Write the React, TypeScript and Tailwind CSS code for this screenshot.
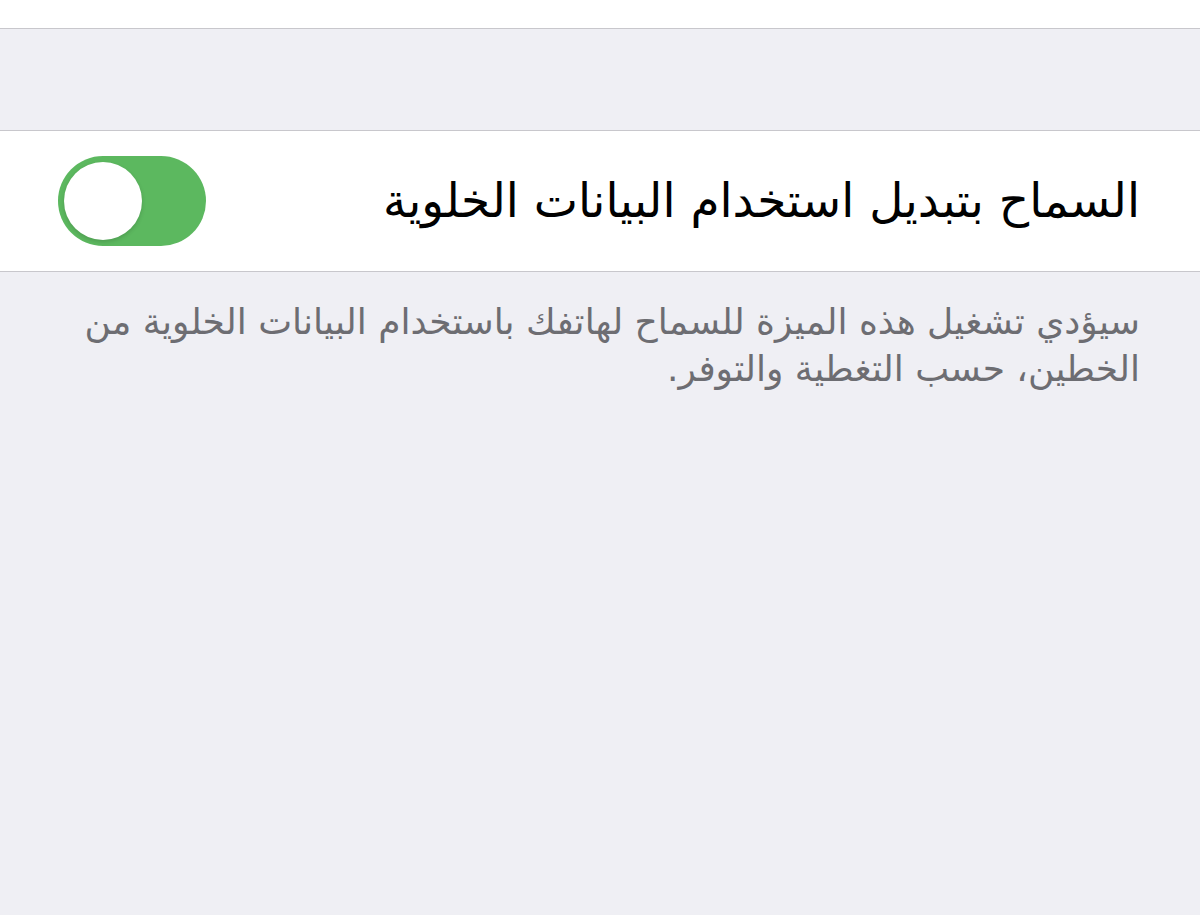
export default function App() {
  return (
    <div dir="rtl" className="w-[1200px] h-[915px] bg-[#efeff4] overflow-hidden" style={{ fontFamily: '"DejaVu Sans", sans-serif' }}>
      <div className="h-[29px] bg-white border-b border-[#c8c7cc]" />
      <div className="h-[101px]" />
      <div className="h-[142px] bg-white border-y border-[#c8c7cc] flex items-center justify-between pr-[60px] pl-[58px]">
        <span className="text-[47px] leading-[56px] text-black">السماح بتبديل استخدام البيانات الخلوية</span>
        <div className="w-[148px] h-[90px] rounded-full bg-[#5cb85f] p-[6px] flex justify-end">
          <div className="w-[78px] h-[78px] rounded-full bg-white shadow-[0_2px_4px_rgba(0,0,0,0.15)]" />
        </div>
      </div>
      <p className="pr-[60px] pl-[60px] pt-[26px] text-[36px] leading-[47px] text-[#6d6d72]">
        سيؤدي تشغيل هذه الميزة للسماح لهاتفك باستخدام البيانات الخلوية من الخطين، حسب التغطية والتوفر.
      </p>
    </div>
  )
}
